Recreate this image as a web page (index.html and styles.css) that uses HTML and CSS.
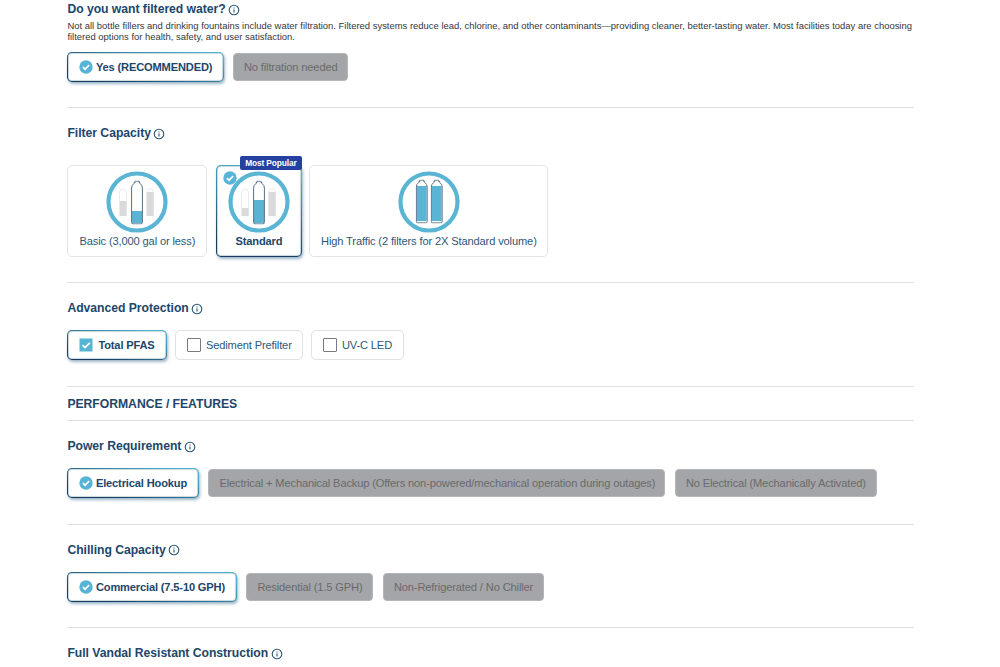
FILE: index.html
```html
<!DOCTYPE html>
<html lang="en">
<head>
<meta charset="utf-8">
<title>Product configurator</title>
<link rel="stylesheet" href="styles.css">
</head>
<body>
<svg class="defs" aria-hidden="true">
  <symbol id="info" viewBox="0 0 12 12"><circle cx="6" cy="6" r="4.8" fill="none" stroke="currentColor" stroke-width="1.1"/><path d="M6 5.500V8.400M6 3.500V4.600" stroke="currentColor" stroke-width="1.100"/></symbol>
  <symbol id="check" viewBox="0 0 14 14"><circle cx="7" cy="7" r="6.7" fill="#58b4d6"/><path d="M3.9 7.1L6.1 9.2L10.2 5" fill="none" stroke="#fff" stroke-width="1.7"/></symbol>
  <symbol id="side" viewBox="0 0 8 28"><path d="M.5 27.500V5Q.500 3 2 2V1h4v1q1.500 1 1.500 3v22.500z" fill="#fff" stroke="#e6e6e8" stroke-width=".8"/></symbol>
  <symbol id="bottle" viewBox="0 0 12 44"><path d="M.6 42V7.500Q.600 4.500 3 3V2h1V.6h4V2h1v1q2.400 1.500 2.400 4.500V42q0 1.400-1.400 1.400H2Q.6 43.400.6 42z" fill="none" stroke="#557087" stroke-width="1"/></symbol>
</svg>
<main class="page">
  <section class="section first">
    <h2 class="title">Do you want filtered water? <svg class="info"><use href="#info"/></svg></h2>
    <p class="desc">Not all bottle fillers and drinking fountains include water filtration. Filtered systems reduce lead, chlorine, and other contaminants—providing cleaner, better-tasting water. Most facilities today are choosing<br>filtered options for health, safety, and user satisfaction.</p>
    <div class="options">
      <div class="chip selected w-yes"><svg class="check"><use href="#check"/></svg>Yes (RECOMMENDED)</div>
      <div class="chip disabled w-nofilter">No filtration needed</div>
    </div>
  </section>

  <section class="section capacity">
    <h2 class="title">Filter Capacity <svg class="info low"><use href="#info"/></svg></h2>
    <div class="cards">
      <div class="card basic">
        <svg class="art" viewBox="0 0 62 62">
          <circle cx="31" cy="31" r="28.500" fill="#fff" stroke="#5ab4d4" stroke-width="4.200"/>
          <use href="#side" x="13" y="17" width="8" height="28"/><path d="M14 30h6.500v15h-6.500z" fill="#dadadc"/>
          <use href="#side" x="40" y="17" width="8" height="28"/><path d="M41 21h6.500v24h-6.500z" fill="#dadadc"/>
          <path d="M26 40h10v12h-10z" fill="#5ab4d4"/>
          <use href="#bottle" x="25" y="9.500" width="12" height="44"/>
        </svg>
        <span>Basic (3,000 gal or less)</span>
      </div>
      <div class="card selected standard">
        <div class="badge">Most Popular</div>
        <svg class="check corner"><use href="#check"/></svg>
        <svg class="art" viewBox="0 0 62 62">
          <circle cx="31" cy="31" r="28.500" fill="#fff" stroke="#5ab4d4" stroke-width="4.200"/>
          <use href="#side" x="13" y="17" width="8" height="28"/><path d="M14 37h6.500v8h-6.500z" fill="#dadadc"/>
          <use href="#side" x="40" y="17" width="8" height="28"/><path d="M41 21h6.500v24h-6.500z" fill="#dadadc"/>
          <path d="M26 29h10v23h-10z" fill="#5ab4d4"/>
          <use href="#bottle" x="25" y="9.500" width="12" height="44"/>
        </svg>
        <span>Standard</span>
      </div>
      <div class="card high">
        <svg class="art" viewBox="0 0 62 62">
          <circle cx="31" cy="31" r="28.500" fill="#fff" stroke="#5ab4d4" stroke-width="4.200"/>
          <path d="M19 15h9.500v35h-9.500zM34 15h9.500v35h-9.500z" fill="#5ab4d4"/>
          <use href="#bottle" x="17.500" y="8.500" width="12.500" height="44"/>
          <use href="#bottle" x="32.500" y="8.500" width="12.500" height="44"/>
        </svg>
        <span>High Traffic (2 filters for 2X Standard volume)</span>
      </div>
    </div>
  </section>

  <section class="section">
    <h2 class="title">Advanced Protection <svg class="info"><use href="#info"/></svg></h2>
    <div class="options narrow">
      <div class="chip selected w-pfas"><svg class="box" viewBox="0 0 14 14"><path d="M.5.5h13v13H.5z" fill="#58b4d6"/><path d="M3.500 7L6 9.500L10.800 4.800" fill="none" stroke="#fff" stroke-width="1.700"/></svg>Total PFAS</div>
      <div class="chip w-sediment"><i class="box empty"></i>Sediment Prefilter</div>
      <div class="chip w-uvc"><i class="box empty"></i>UV-C LED</div>
    </div>
  </section>

  <h2 class="group">PERFORMANCE / FEATURES</h2>

  <section class="section">
    <h2 class="title">Power Requirement <svg class="info low"><use href="#info"/></svg></h2>
    <div class="options wide">
      <div class="chip selected w-hookup"><svg class="check"><use href="#check"/></svg>Electrical Hookup</div>
      <div class="chip disabled w-backup">Electrical + Mechanical Backup (Offers non-powered/mechanical operation during outages)</div>
      <div class="chip disabled w-noelec">No Electrical (Mechanically Activated)</div>
    </div>
  </section>

  <section class="section">
    <h2 class="title">Chilling Capacity <svg class="info"><use href="#info"/></svg></h2>
    <div class="options wide">
      <div class="chip selected w-commercial"><svg class="check"><use href="#check"/></svg>Commercial (7.5-10 GPH)</div>
      <div class="chip disabled w-residential">Residential (1.5 GPH)</div>
      <div class="chip disabled w-nochiller">Non-Refrigerated / No Chiller</div>
    </div>
  </section>

  <section class="section last">
    <h2 class="title">Full Vandal Resistant Construction <svg class="info"><use href="#info"/></svg></h2>
  </section>
</main>
</body>
</html>
```
FILE: styles.css
```css
* { box-sizing: border-box; }
body { margin: 0; background: #fff; color: #2d587b; font-family: "Liberation Sans", Arial, sans-serif; font-size: 11.1px; letter-spacing: -.13px; }
.defs { position: absolute; width: 0; height: 0; }
.page { width: 846.5px; margin-left: 67.4px; }
.section { height: 103.700px; padding-top: 15px; border-top: 1px solid #dedfe1; }
.first { height: 107px; padding-top: 0; border-top: 0; }
.last { height: 39px; }
.capacity { height: 175.300px; }
.title { display: flex; align-items: center; gap: 2.400px; height: 20px; margin: 0; font-size: 12.2px; letter-spacing: -.03px; font-weight: 700; line-height: 20px; color: #1c466a; white-space: nowrap; }
.info { width: 12px; height: 12px; margin-top: 1px; color: #285375; }
.info.low { margin-top: 2px; }
.first .title { height: 18px; }
.desc { height: 22px; margin: 3px 0 9px; font-size: 9.450px; letter-spacing: 0; line-height: 10.800px; color: #353739; white-space: nowrap; }
.options { display: flex; gap: 9px; margin-top: 12px; }
.first .options { margin-top: 0; }
.options.narrow { gap: 8px; }
.options.wide { gap: 9.500px; }
.chip { display: flex; align-items: center; flex: none; height: 30px; padding: 0 11px; border: 1px solid #dfe1e4; border-radius: 5px; white-space: nowrap; background: #fff; }
.selected { border: 1px solid transparent; border-radius: 5px; background: linear-gradient(#fff, #fff) padding-box, linear-gradient(15deg, #173c5d 15%, #4fb5cc 90%) border-box; color: #1c466a; font-weight: 700; letter-spacing: -.15px; box-shadow: inset 0 0 1px 0.3px rgba(40, 100, 135, .75), 1px 2px 3px rgba(35, 90, 135, .45); }
.chip.selected { padding: 0 11px; }
.disabled { height: 28px; margin-top: 1px; border: 1px solid #b4b5b8; background: #a4a5a8; color: #686a6c; border-radius: 4px; padding: 0 10px; }
.check { flex: none; width: 14px; height: 14px; margin-right: 2.500px; }
.box { flex: none; width: 14px; height: 14px; margin-right: 5px; }
.empty { border: 1px solid #777b80; border-radius: 1px; }
.w-yes { width: 156.500px; }
.w-nofilter { width: 115px; }
.w-pfas { width: 99.500px; }
.w-sediment { width: 128px; }
.w-uvc { width: 93px; }
.w-hookup { width: 131.500px; }
.w-backup { width: 457px; }
.w-noelec { width: 202px; }
.w-commercial { width: 169.500px; }
.w-residential { width: 127px; }
.w-nochiller { width: 161px; }
.cards { display: flex; gap: 8px; margin-top: 22px; }
.card { position: relative; display: flex; flex-direction: column; align-items: center; flex: none; height: 92px; padding-top: 5px; border: 1px solid #e3e4e6; border-radius: 5px; white-space: nowrap; }
.card.selected { border: 1px solid transparent; }
.card span { line-height: 15px; }
.art { width: 62px; height: 62px; flex: none; margin-bottom: 1px; }
.basic { width: 140px; }
.standard { width: 86px; }
.high { width: 239px; }
.badge { position: absolute; top: -10px; right: -1px; width: 62px; height: 14px; border-radius: 2px; background: #2440a0; color: #fff; font-size: 8.400px; font-weight: 700; letter-spacing: -.13px; line-height: 14px; text-align: center; }
.corner { position: absolute; left: 6px; top: 5px; margin: 0; }
.standard { margin-left: .5px; margin-right: -.5px; }
.group { height: 34px; margin: 0; border-top: 1px solid #dedfe1; font-size: 12.2px; letter-spacing: -.03px; line-height: 35px; color: #1c466a; }
```
